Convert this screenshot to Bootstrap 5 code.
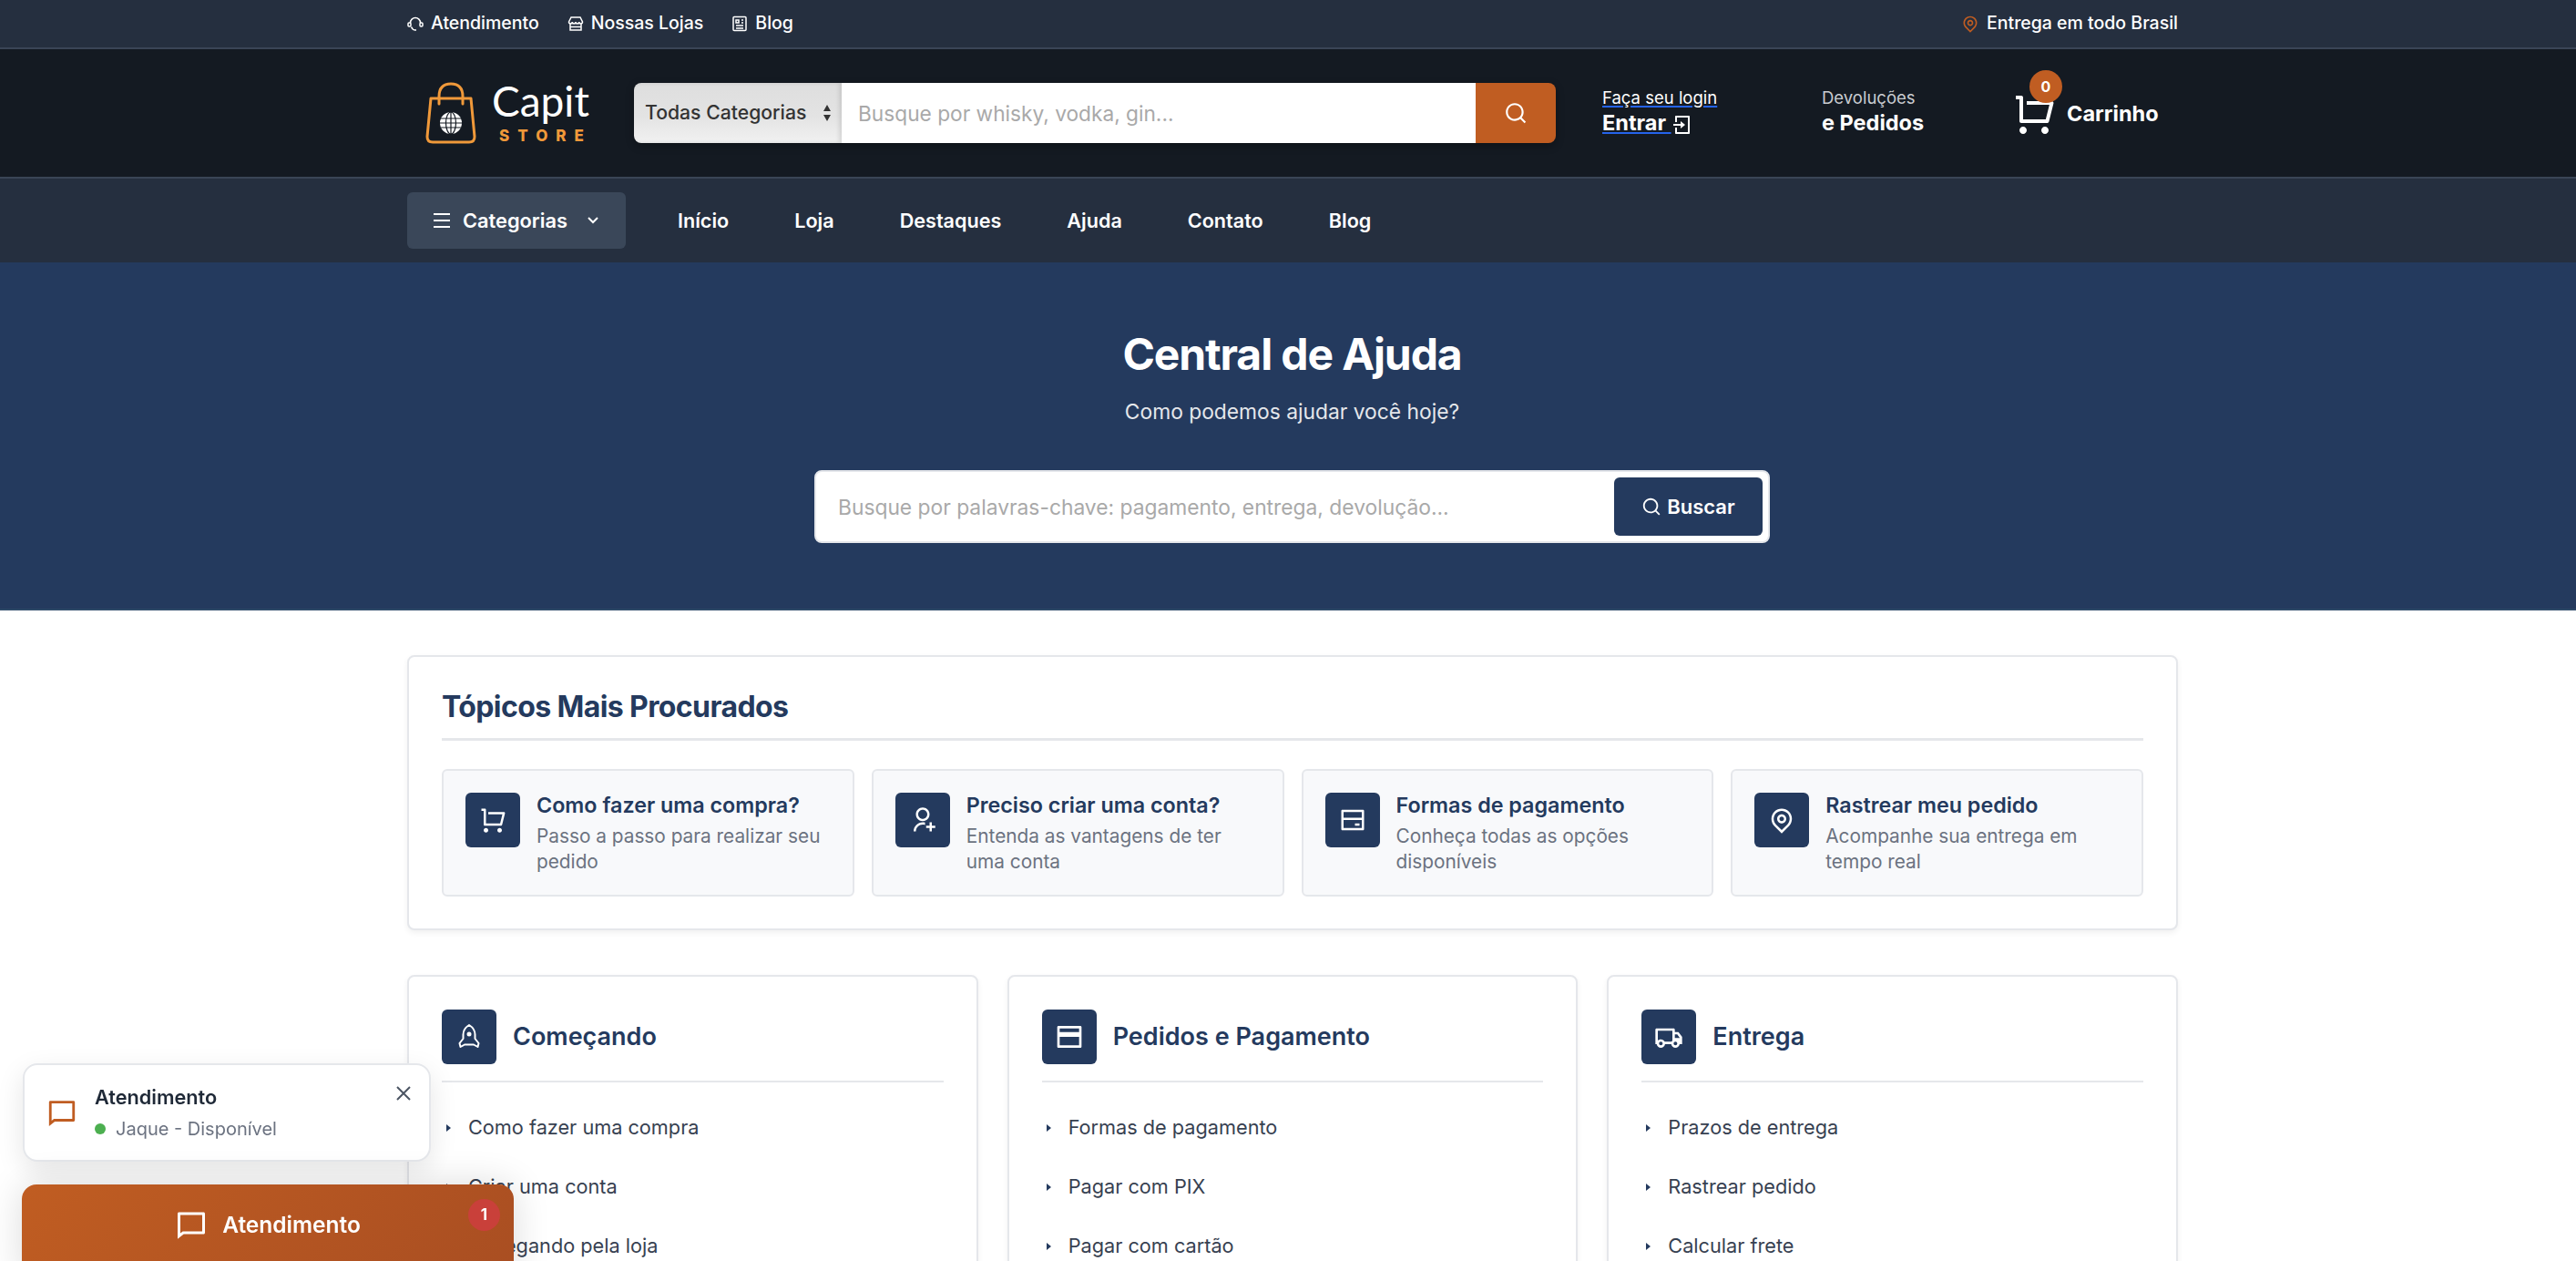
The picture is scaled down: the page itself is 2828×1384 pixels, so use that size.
<!DOCTYPE html>
<html lang="pt-BR">
<head>
    <meta charset="UTF-8">
    <meta name="viewport" content="width=device-width, initial-scale=1.0">
    <title>Central de Ajuda - Capit Store</title>
    <link href="https://cdn.jsdelivr.net/npm/bootstrap@5.3.0/dist/css/bootstrap.min.css" rel="stylesheet">
    <style>
        html, body { height: 100%; overflow: hidden; }
        body { font-family: Inter, "Liberation Sans", sans-serif; background: #fff; color: #1f2937; }
        a { text-decoration: none; }
        .page-clip { height: 1384px; overflow: hidden; position: relative; }
        .site-wrap { width: 1944px; margin-left: 447px; }
        .ico { fill: currentColor; flex-shrink: 0; display: block; }
        .ico-line { fill: none; stroke: currentColor; stroke-width: 2; flex-shrink: 0; display: block; }
        .ico-thin { stroke-width: 1.5; }

        /* top bar */
        .top-strip { background: #252f3f; border-bottom: 2px solid #3a4556; height: 54px; color: #fff; font-size: 19.5px; font-weight: 500; padding-bottom: 1px; }
        .top-strip a { color: #fff; }
        .top-links { gap: 31px; }
        .pin-orange { color: #c05d22; }

        /* header */
        .main-head { background: #141a22; height: 142px; border-bottom: 2px solid #3a4556; }
        .logo-box { width: 178px; margin-left: 20px; margin-right: 51px; gap: 17px; }
        .logo-name { color: #fff; font-family: Lato, sans-serif; font-weight: 400; font-size: 46px; line-height: 42px; }
        .logo-sub { color: #f0993a; font-weight: 800; font-size: 17px; line-height: 18px; letter-spacing: 9px; padding-left: 8px; margin-top: 8px; }
        .head-search { width: 1012px; height: 66px; box-shadow: 0 3px 10px rgba(0,0,0,.3); border-radius: 8px; }
        .cat-select { width: 228px; height: 66px; flex: none; border: 0; border-radius: 8px 0 0 8px; font-size: 21.2px; font-weight: 500; color: #333; padding: 0 12px; cursor: pointer;
            appearance: none; background: linear-gradient(#dedede, #e3e3e3 55%, #f1f1f1); box-shadow: inset -3px 0 4px rgba(0,0,0,.1); }
        .sel-arrows { position: absolute; left: 206px; top: 23px; color: #333; pointer-events: none; }
        .head-input { border: 0; border-radius: 0; height: 66px; font-size: 22.7px; padding: 0 18px; color: #333; }
        .head-input::placeholder, .hero-input::placeholder { color: #a9a9a9; opacity: 1; }
        .head-btn { width: 88px; height: 66px; flex: none; background: #c05d22; border: 0; border-radius: 0 8px 8px 0; color: #fff; padding: 0; }
        .head-btn:hover { background: #c05d22; color: #fff; }
        .acct-link { margin-left: 51px; width: 241px; color: #fff; padding-bottom: 4px; }
        .acct-link a { color: #fff; text-decoration: underline; text-decoration-color: #2563eb; text-decoration-thickness: 2px; text-underline-offset: 2px; }
        .line-sm { font-size: 18.5px; line-height: 25px; font-weight: 400; }
        .line-lg { font-size: 23.5px; line-height: 30px; font-weight: 700; }
        .line-mute { color: #c9ccd1; }
        .orders-link { width: 209px; color: #fff; padding-bottom: 4px; }
        .cart-link { color: #fff; position: relative; gap: 12px; font-size: 23.5px; font-weight: 700; padding-top: 1px; }
        .cart-count { position: absolute; left: 19px; top: -23px; width: 36px; height: 36px; border-radius: 50%; background: #c05d22; color: #fff; font-size: 16px; font-weight: 700; }

        /* nav */
        .cat-nav { background: #252f3f; height: 92px; }
        .cat-btn { background: #3a4759; color: #fff; width: 240px; height: 62px; border: 0; border-radius: 6px; font-size: 21.8px; font-weight: 600; gap: 13px; padding: 0 0 0 28px; }
        .cat-btn:hover { background: #3a4759; color: #fff; }
        .cat-links { margin-left: 57px; gap: 72px; }
        .cat-links a { color: #fff; font-size: 21.6px; font-weight: 600; }

        /* hero */
        .hero-band { background: #243a5e; border-bottom: 2px solid #2e4a68; padding: 72px 0 72px 9px; text-align: center; color: #fff; }
        .hero-band h1 { font-size: 48px; line-height: 58px; font-weight: 700; margin: 0 0 16px; letter-spacing: -1.1px; }
        .hero-band p { font-size: 22.8px; line-height: 36px; margin: 0 0 46px; color: #e5e7eb; }
        .hero-search { width: 1049px; height: 80px; margin: 0 auto; background: #fff; border: 2px solid #e5e7eb; border-radius: 8px; padding: 6px; }
        .hero-input { border: 0; font-size: 22.8px; padding: 0 18px; height: 64px; color: #333; }
        .hero-btn { background: #243a5e; color: #fff; width: 163px; height: 64px; flex: none; border: 0; border-radius: 6px; font-size: 22px; font-weight: 600; gap: 6px; padding: 0; }
        .hero-btn:hover { background: #243a5e; color: #fff; }

        /* panels */
        .help-panel { border: 2px solid #e5e7eb; border-radius: 8px; box-shadow: 0 3px 6px rgba(0,0,0,.06); background: #fff; }
        .topics-panel { margin-top: 49px; height: 302px; padding: 0 36px; }
        .topics-panel h2 { font-size: 32px; font-weight: 700; color: #243a5e; margin: 0; padding-top: 31px; height: 92px; line-height: 48px; border-bottom: 3px solid #e5e7eb; letter-spacing: -.6px; }
        .topic-row { --bs-gutter-x: 19px; margin-top: 31px; }
        .topic-item { height: 140px; background: #f8f9fb; border: 2px solid #e5e7eb; border-radius: 6px; padding: 24px 24px 0; gap: 18px; }
        .icon-tile { width: 60px; height: 60px; flex: none; border-radius: 6px; background: #243a5e; color: #fff; }
        .topic-title { font-size: 23.3px; line-height: 28px; font-weight: 600; color: #243a5e; margin-bottom: 6px; }
        .topic-text { font-size: 20.8px; line-height: 28px; color: #6b7280; }
        .group-row { --bs-gutter-x: 32px; margin-top: 49px; }
        .group-card { height: 500px; padding: 36px; }
        .group-head { gap: 18px; height: 80px; padding-bottom: 20px; border-bottom: 2px solid #e5e7eb; align-items: flex-start; }
        .group-head h3 { font-size: 27px; line-height: 60px; font-weight: 600; color: #243a5e; margin: 0; }
        .group-list { margin: 17px 0 0; }
        .group-list li { height: 65px; font-size: 21.7px; color: #374151; gap: 19px; padding-left: 5px; }
        .tri { width: 0; height: 0; border-left: 5px solid #243a5e; border-top: 4px solid transparent; border-bottom: 4px solid transparent; }

        /* chat widget */
        .chat-pop { position: fixed; left: 25px; top: 1167px; width: 448px; height: 108px; background: #fff; border: 2px solid #e5e7eb; border-radius: 16px; box-shadow: 0 10px 30px rgba(0,0,0,.1); padding: 0 24px; gap: 19px; z-index: 5; }
        .chat-pop-title { font-size: 21.7px; font-weight: 600; color: #1f2937; line-height: 28px; margin-bottom: 8px; }
        .chat-pop-status { font-size: 20px; color: #6b7280; line-height: 26px; gap: 11px; }
        .on-dot { width: 12px; height: 12px; border-radius: 50%; background: #4caf50; }
        .chat-close { position: absolute; right: 19px; top: 22px; color: #4b5563; }
        .chat-bar { position: fixed; left: 24px; top: 1300px; width: 540px; height: 104px; padding-bottom: 22px; border: 0; border-radius: 16px 16px 0 0; color: #fff; font-size: 24.5px; font-weight: 600; gap: 16px;
            background: linear-gradient(135deg, #c05d22, #a94e22); box-shadow: 0 0 40px rgba(0,0,0,.14); z-index: 5; }
        .chat-bar:hover { color: #fff; }
        .chat-bar-count { position: absolute; left: 490px; top: 16px; width: 35px; height: 35px; border-radius: 50%; background: #c9403a; font-size: 17px; font-weight: 700; }
        .corner-arc { position: fixed; left: -70px; top: 1300px; width: 90px; height: 90px; border: 6px solid #111; border-radius: 50%; clip-path: inset(60px 60px 0 0); z-index: 6; }
    </style>
</head>
<body>
<svg width="0" height="0" class="position-absolute">
    <defs>
        <symbol id="i-search" viewBox="0 0 24 24"><path d="M18.031 16.6168L22.3137 20.8995L20.8995 22.3137L16.6168 18.031C15.0769 19.263 13.124 20 11 20C6.032 20 2 15.968 2 11C2 6.032 6.032 2 11 2C15.968 2 20 6.032 20 11C20 13.124 19.263 15.0769 18.031 16.6168ZM16.0247 15.8748C17.2475 14.6146 18 12.8956 18 11C18 7.1325 14.8675 4 11 4C7.1325 4 4 7.1325 4 11C4 14.8675 7.1325 18 11 18C12.8956 18 14.6146 17.2475 15.8748 16.0247L16.0247 15.8748Z"/></symbol>
        <symbol id="i-cart" viewBox="0 0 24 24"><path d="M4.00488 16V4H2.00488V2H5.00488C5.55717 2 6.00488 2.44772 6.00488 3V15H18.4433L20.4433 7H8.00488V5H21.7241C22.2764 5 22.7241 5.44772 22.7241 6C22.7241 6.08176 22.7141 6.16322 22.6942 6.24254L20.1942 16.2425C20.083 16.6877 19.683 17 19.2241 17H5.00488C4.4526 17 4.00488 16.5523 4.00488 16ZM6.00488 23C4.90031 23 4.00488 22.1046 4.00488 21C4.00488 19.8954 4.90031 19 6.00488 19C7.10945 19 8.00488 19.8954 8.00488 21C8.00488 22.1046 7.10945 23 6.00488 23ZM18.0049 23C16.9003 23 16.0049 22.1046 16.0049 21C16.0049 19.8954 16.9003 19 18.0049 19C19.1095 19 20.0049 19.8954 20.0049 21C20.0049 22.1046 19.1095 23 18.0049 23Z"/></symbol>
        <symbol id="i-pin" viewBox="0 0 24 24"><path d="M12 20.8995L16.9497 15.9497C19.6834 13.2161 19.6834 8.78392 16.9497 6.05025C14.2161 3.31658 9.78392 3.31658 7.05025 6.05025C4.31658 8.78392 4.31658 13.2161 7.05025 15.9497L12 20.8995ZM12 23.7279L5.63604 17.364C2.12132 13.8492 2.12132 8.15076 5.63604 4.63604C9.15076 1.12132 14.8492 1.12132 18.364 4.63604C21.8787 8.15076 21.8787 13.8492 18.364 17.364L12 23.7279ZM12 13C13.1046 13 14 12.1046 14 11C14 9.89543 13.1046 9 12 9C10.8954 9 10 9.89543 10 11C10 12.1046 10.8954 13 12 13ZM12 15C9.79086 15 8 13.2091 8 11C8 8.79086 9.79086 7 12 7C14.2091 7 16 8.79086 16 11C16 13.2091 14.2091 15 12 15Z"/></symbol>
        <symbol id="i-useradd" viewBox="0 0 24 24"><path d="M14 14.252V16.3414C13.3744 16.1203 12.7013 16 12 16C8.68629 16 6 18.6863 6 22H4C4 17.5817 7.58172 14 12 14C12.6906 14 13.3608 14.0875 14 14.252ZM12 13C8.685 13 6 10.315 6 7C6 3.685 8.685 1 12 1C15.315 1 18 3.685 18 7C18 10.315 15.315 13 12 13ZM12 11C14.21 11 16 9.21 16 7C16 4.79 14.21 3 12 3C9.79 3 8 4.79 8 7C8 9.21 9.79 11 12 11ZM18 17V14H20V17H23V19H20V22H18V19H15V17H18Z"/></symbol>
        <symbol id="i-card" viewBox="0 0 24 24"><path d="M3.00488 2.99979H21.0049C21.5572 2.99979 22.0049 3.4475 22.0049 3.99979V19.9998C22.0049 20.5521 21.5572 20.9998 21.0049 20.9998H3.00488C2.4526 20.9998 2.00488 20.5521 2.00488 19.9998V3.99979C2.00488 3.4475 2.4526 2.99979 3.00488 2.99979ZM20.0049 11.9998H4.00488V18.9998H20.0049V11.9998ZM20.0049 9.99979V4.99979H4.00488V9.99979H20.0049ZM14.0049 14.9998H18.0049V16.9998H14.0049V14.9998Z"/></symbol>
        <symbol id="i-cardfill" viewBox="0 0 24 24"><path d="M3 3H21C21.55 3 22 3.45 22 4V20C22 20.55 21.55 21 21 21H3C2.45 21 2 20.55 2 20V4C2 3.45 2.45 3 3 3ZM20 12H4V19H20V12ZM20 8V5H4V8H20Z"/></symbol>
        <symbol id="i-truck" viewBox="0 0 24 24"><path d="M8.96456 18C8.72194 19.6961 7.26324 21 5.5 21C3.73676 21 2.27806 19.6961 2.03544 18H1V6C1 5.44772 1.44772 5 2 5H16C16.5523 5 17 5.44772 17 6V8H20L23 12.0557V18H20.9646C20.7219 19.6961 19.2632 21 17.5 21C15.7368 21 14.2781 19.6961 14.0354 18H8.96456ZM15 7H3V15.0505C3.63526 14.4022 4.52066 14 5.5 14C6.89627 14 8.10113 14.8175 8.66 16H14.34C14.5291 15.6 14.7898 15.2411 15 14.9355V7ZM17 13H21V12.715L18.9917 10H17V13ZM17.5 19C18.3284 19 19 18.3284 19 17.5C19 16.6716 18.3284 16 17.5 16C16.6716 16 16 16.6716 16 17.5C16 18.3284 16.6716 19 17.5 19ZM7 17.5C7 16.6716 6.32843 16 5.5 16C4.67157 16 4 16.6716 4 17.5C4 18.3284 4.67157 19 5.5 19C6.32843 19 7 18.3284 7 17.5Z"/></symbol>
        <symbol id="i-chat" viewBox="0 0 24 24"><path d="M6.45455 19L2 22.5V4C2 3.44772 2.44772 3 3 3H21C21.5523 3 22 3.44772 22 4V18C22 18.5523 21.5523 19 21 19H6.45455ZM5.76282 17H20V5H4V18.3851L5.76282 17Z"/></symbol>
        <symbol id="i-login" viewBox="0 0 24 24"><path d="M4 15H6V20H18V4H6V9H4V3C4 2.44772 4.44772 2 5 2H19C19.5523 2 20 2.44772 20 3V21C20 21.5523 19.5523 22 19 22H5C4.44772 22 4 21.5523 4 21V15ZM10 11V8L15 12L10 16V13H2V11H10Z"/></symbol>
    </defs>
</svg>

<div class="page-clip">
    <!-- top bar -->
    <div class="top-strip">
        <div class="site-wrap d-flex justify-content-between align-items-center h-100">
            <div class="top-links d-flex align-items-center">
                <a href="#" class="d-flex align-items-center gap-2">
                    <svg class="ico-line ico-thin" width="18" height="18" viewBox="0 0 18 18"><path d="M3.500 8a5.500 5.500 0 0 1 11 0"/><rect x="1" y="8" width="3" height="4" rx="1"/><rect x="14" y="8" width="3" height="4" rx="1"/><path d="M4.500 12.500c1 2.500 2.500 3.500 4.500 3.500h1"/></svg>
                    Atendimento
                </a>
                <a href="#" class="d-flex align-items-center gap-2">
                    <svg class="ico-line ico-thin" width="18" height="18" viewBox="0 0 18 18"><path d="M3 9v7h12V9"/><path d="M1.500 7L4 2h10l2.500 5c0 2.500-3.750 2.500-3.750 0 0 2.500-3.750 2.500-3.750 0 0 2.500-3.750 2.500-3.750 0 0 2.500-3.750 2.500-3.750 0z"/><path d="M3 12.500h12"/></svg>
                    Nossas Lojas
                </a>
                <a href="#" class="d-flex align-items-center gap-2">
                    <svg class="ico-line ico-thin" width="18" height="18" viewBox="0 0 18 18"><rect x="2" y="1.500" width="14" height="15" rx="1"/><path d="M5 5h3v3H5zM11 5h2M11 8h2M5 11h8M5 14h8"/></svg>
                    Blog
                </a>
            </div>
            <div class="d-flex align-items-center gap-2">
                <svg class="ico pin-orange" width="20" height="20"><use href="#i-pin"/></svg>
                Entrega em todo Brasil
            </div>
        </div>
    </div>

    <!-- header -->
    <header class="main-head d-flex align-items-center">
        <div class="site-wrap d-flex align-items-center">
            <a href="#" class="logo-box d-flex align-items-center">
                <svg width="56" height="68" viewBox="0 0 56 68" fill="none" class="flex-shrink-0">
                    <path d="M6 18H50L54 60Q54 66 48 66H8Q2 66 2 60Z" stroke="#f0993a" stroke-width="3" stroke-linejoin="round"/>
                    <path d="M15 24V16Q15 2 28 2Q41 2 41 16V24" stroke="#f0993a" stroke-width="3" stroke-linecap="round"/>
                    <circle cx="28" cy="45" r="12" fill="#fff"/>
                    <g stroke="#141a22" stroke-width="1.2">
                        <ellipse cx="28" cy="45" rx="5.5" ry="12"/>
                        <path d="M28 33V57M17 40H39M16 45H40M17 50H39"/>
                    </g>
                </svg>
                <div>
                    <div class="logo-name">Capit</div>
                    <div class="logo-sub">STORE</div>
                </div>
            </a>
            <form class="head-search d-flex position-relative">
                <select class="cat-select"><option>Todas Categorias</option></select>
                <svg class="sel-arrows" width="12" height="20" viewBox="0 0 12 20" fill="currentColor"><path d="M6 1L10 8H2ZM6 19L2 12H10Z"/></svg>
                <input type="text" class="form-control head-input" placeholder="Busque por whisky, vodka, gin...">
                <button type="button" class="btn head-btn d-flex align-items-center justify-content-center">
                    <svg class="ico" width="26" height="26"><use href="#i-search"/></svg>
                </button>
            </form>
            <div class="acct-link">
                <div class="line-sm"><a href="#">Faça seu login</a></div>
                <div class="line-lg"><a href="#">Entrar <svg class="ico d-inline-block align-text-bottom" width="24" height="24"><use href="#i-login"/></svg></a></div>
            </div>
            <div class="orders-link">
                <div class="line-sm line-mute">Devoluções</div>
                <div class="line-lg">e Pedidos</div>
            </div>
            <a href="#" class="cart-link d-flex align-items-center">
                <svg class="ico" width="48" height="48"><use href="#i-cart"/></svg>
                Carrinho
                <span class="cart-count d-flex align-items-center justify-content-center">0</span>
            </a>
        </div>
    </header>

    <!-- nav -->
    <nav class="cat-nav d-flex align-items-center">
        <div class="site-wrap d-flex align-items-center">
            <button type="button" class="btn cat-btn d-flex align-items-center">
                <svg class="ico-line" width="20" height="20" viewBox="0 0 20 20"><path d="M1 3h18M1 10h18M1 17h18"/></svg>
                Categorias
                <svg class="ico-line ms-2" width="14" height="14" viewBox="0 0 14 14"><path d="M2 4l5 5 5-5"/></svg>
            </button>
            <div class="cat-links d-flex">
                <a href="#">Início</a>
                <a href="#">Loja</a>
                <a href="#">Destaques</a>
                <a href="#">Ajuda</a>
                <a href="#">Contato</a>
                <a href="#">Blog</a>
            </div>
        </div>
    </nav>

    <!-- hero -->
    <section class="hero-band">
        <h1>Central de Ajuda</h1>
        <p>Como podemos ajudar você hoje?</p>
        <form class="hero-search d-flex align-items-center">
            <input type="text" class="form-control hero-input" placeholder="Busque por palavras-chave: pagamento, entrega, devolução...">
            <button type="button" class="btn hero-btn d-flex align-items-center justify-content-center">
                <svg class="ico" width="22" height="22"><use href="#i-search"/></svg>
                Buscar
            </button>
        </form>
    </section>

    <div class="site-wrap">
        <!-- topics -->
        <div class="help-panel topics-panel">
            <h2>Tópicos Mais Procurados</h2>
            <div class="row topic-row">
                <div class="col-3">
                    <div class="topic-item d-flex">
                        <div class="icon-tile d-flex align-items-center justify-content-center"><svg class="ico" width="30" height="30"><use href="#i-cart"/></svg></div>
                        <div><div class="topic-title">Como fazer uma compra?</div><div class="topic-text">Passo a passo para realizar seu pedido</div></div>
                    </div>
                </div>
                <div class="col-3">
                    <div class="topic-item d-flex">
                        <div class="icon-tile d-flex align-items-center justify-content-center"><svg class="ico" width="30" height="30"><use href="#i-useradd"/></svg></div>
                        <div><div class="topic-title">Preciso criar uma conta?</div><div class="topic-text">Entenda as vantagens de ter uma conta</div></div>
                    </div>
                </div>
                <div class="col-3">
                    <div class="topic-item d-flex">
                        <div class="icon-tile d-flex align-items-center justify-content-center"><svg class="ico" width="30" height="30"><use href="#i-card"/></svg></div>
                        <div><div class="topic-title">Formas de pagamento</div><div class="topic-text">Conheça todas as opções disponíveis</div></div>
                    </div>
                </div>
                <div class="col-3">
                    <div class="topic-item d-flex">
                        <div class="icon-tile d-flex align-items-center justify-content-center"><svg class="ico" width="30" height="30"><use href="#i-pin"/></svg></div>
                        <div><div class="topic-title">Rastrear meu pedido</div><div class="topic-text">Acompanhe sua entrega em tempo real</div></div>
                    </div>
                </div>
            </div>
        </div>

        <!-- groups -->
        <div class="row group-row">
            <div class="col-4">
                <div class="help-panel group-card">
                    <div class="group-head d-flex">
                        <div class="icon-tile d-flex align-items-center justify-content-center">
                            <svg class="ico-line" width="30" height="30" viewBox="0 0 30 30"><path d="M15 2C11 4.500 8.500 8.500 8.500 12.500V17L4.500 22L5.500 26L10 23.500H20L24.500 26L25.500 22L21.500 17V12.500C21.500 8.500 19 4.500 15 2Z" stroke-linejoin="round"/><circle cx="15" cy="12" r="2.500" fill="currentColor" stroke="none"/></svg>
                        </div>
                        <h3>Começando</h3>
                    </div>
                    <ul class="list-unstyled group-list">
                        <li class="d-flex align-items-center"><span class="tri"></span>Como fazer uma compra</li>
                        <li class="d-flex align-items-center"><span class="tri"></span>Criar uma conta</li>
                        <li class="d-flex align-items-center"><span class="tri"></span>Navegando pela loja</li>
                    </ul>
                </div>
            </div>
            <div class="col-4">
                <div class="help-panel group-card">
                    <div class="group-head d-flex">
                        <div class="icon-tile d-flex align-items-center justify-content-center"><svg class="ico" width="32" height="32"><use href="#i-cardfill"/></svg></div>
                        <h3>Pedidos e Pagamento</h3>
                    </div>
                    <ul class="list-unstyled group-list">
                        <li class="d-flex align-items-center"><span class="tri"></span>Formas de pagamento</li>
                        <li class="d-flex align-items-center"><span class="tri"></span>Pagar com PIX</li>
                        <li class="d-flex align-items-center"><span class="tri"></span>Pagar com cartão</li>
                    </ul>
                </div>
            </div>
            <div class="col-4">
                <div class="help-panel group-card">
                    <div class="group-head d-flex">
                        <div class="icon-tile d-flex align-items-center justify-content-center"><svg class="ico" width="32" height="32"><use href="#i-truck"/></svg></div>
                        <h3>Entrega</h3>
                    </div>
                    <ul class="list-unstyled group-list">
                        <li class="d-flex align-items-center"><span class="tri"></span>Prazos de entrega</li>
                        <li class="d-flex align-items-center"><span class="tri"></span>Rastrear pedido</li>
                        <li class="d-flex align-items-center"><span class="tri"></span>Calcular frete</li>
                    </ul>
                </div>
            </div>
        </div>
    </div>
</div>

<!-- chat widget -->
<div class="chat-pop d-flex align-items-center">
    <svg class="ico pin-orange" width="34" height="34"><use href="#i-chat"/></svg>
    <div>
        <div class="chat-pop-title">Atendimento</div>
        <div class="chat-pop-status d-flex align-items-center"><span class="on-dot"></span>Jaque - Disponível</div>
    </div>
    <svg class="ico-line chat-close" width="18" height="18" viewBox="0 0 18 18"><path d="M2 2l14 14M16 2L2 16"/></svg>
</div>
<button type="button" class="btn chat-bar d-flex align-items-center justify-content-center">
    <svg class="ico" width="36" height="36"><use href="#i-chat"/></svg>
    Atendimento
    <span class="chat-bar-count d-flex align-items-center justify-content-center">1</span>
</button>
<div class="corner-arc"></div>

<script src="https://cdn.jsdelivr.net/npm/bootstrap@5.3.0/dist/js/bootstrap.bundle.min.js"></script>
</body>
</html>
